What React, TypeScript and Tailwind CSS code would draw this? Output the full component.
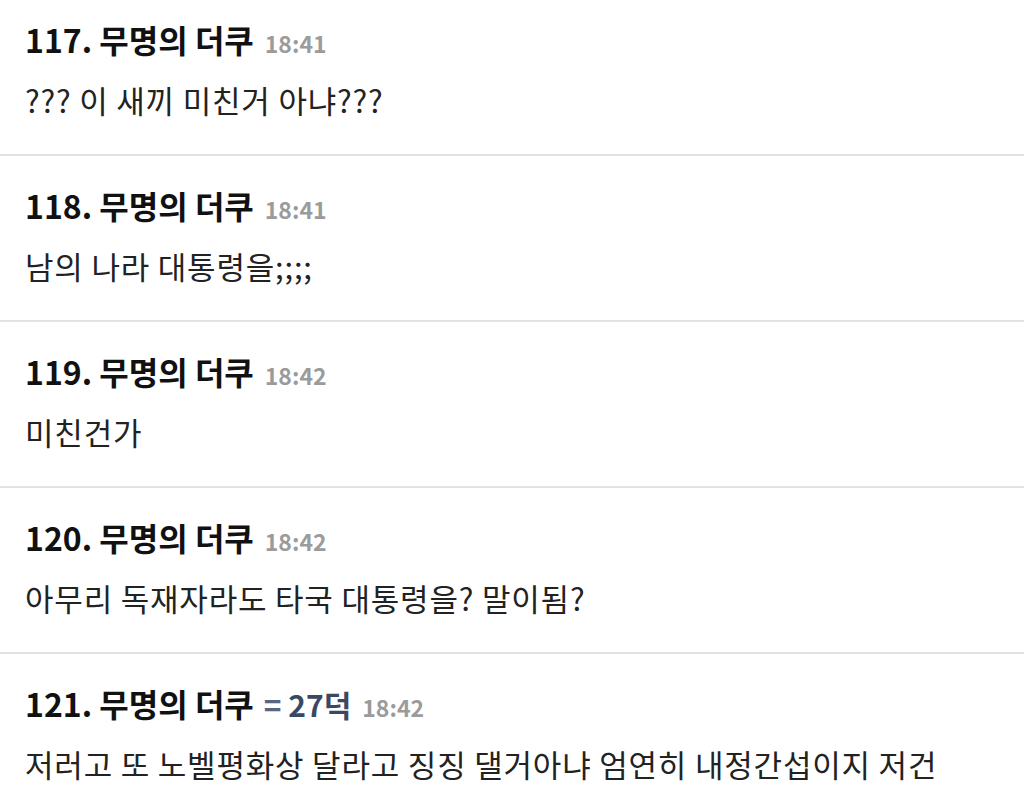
import React from "react";

type Item = { no: number; time: string; body: string; badge?: string };

const items: Item[] = [
  { no: 117, time: "18:41", body: "??? 이 새끼 미친거 아냐???" },
  { no: 118, time: "18:41", body: "남의 나라 대통령을;;;;" },
  { no: 119, time: "18:42", body: "미친건가" },
  { no: 120, time: "18:42", body: "아무리 독재자라도 타국 대통령을? 말이됨?" },
  {
    no: 121,
    time: "18:42",
    body: "저러고 또 노벨평화상 달라고 징징 댈거아냐 엄연히 내정간섭이지 저건",
    badge: "27덕",
  },
];

export default function App() {
  return (
    <div
      className="w-[1024px] h-[810px] overflow-hidden bg-white"
      style={{ fontFamily: '"Noto Sans CJK KR", "Noto Sans", sans-serif' }}
    >
      {items.map((it, i) => (
        <div
          key={it.no}
          className={
            i === 0
              ? "pl-[25px] pt-[19px] pb-[34px]"
              : "pl-[25px] pt-[29px] pb-[34px] border-t-2 border-[#e2e2e2]"
          }
        >
          <div className="flex items-baseline h-[40px] leading-[40px]">
            <span className="text-[32px] font-bold text-[#111111]">
              {it.no}. 무명의 더쿠
            </span>
            {it.badge && (
              <span className="ml-[10px] text-[30px] font-bold text-[#3b4863]">
                <span className="text-[#5a6680]">=</span> {it.badge}
              </span>
            )}
            <span className="ml-[11px] text-[23px] font-bold text-[#9b9b9b]">
              {it.time}
            </span>
          </div>
          <div className="mt-[21px] h-[40px] leading-[40px] text-[31px] text-[#222222] tracking-[0.8px]">
            {it.body}
          </div>
        </div>
      ))}
    </div>
  );
}
